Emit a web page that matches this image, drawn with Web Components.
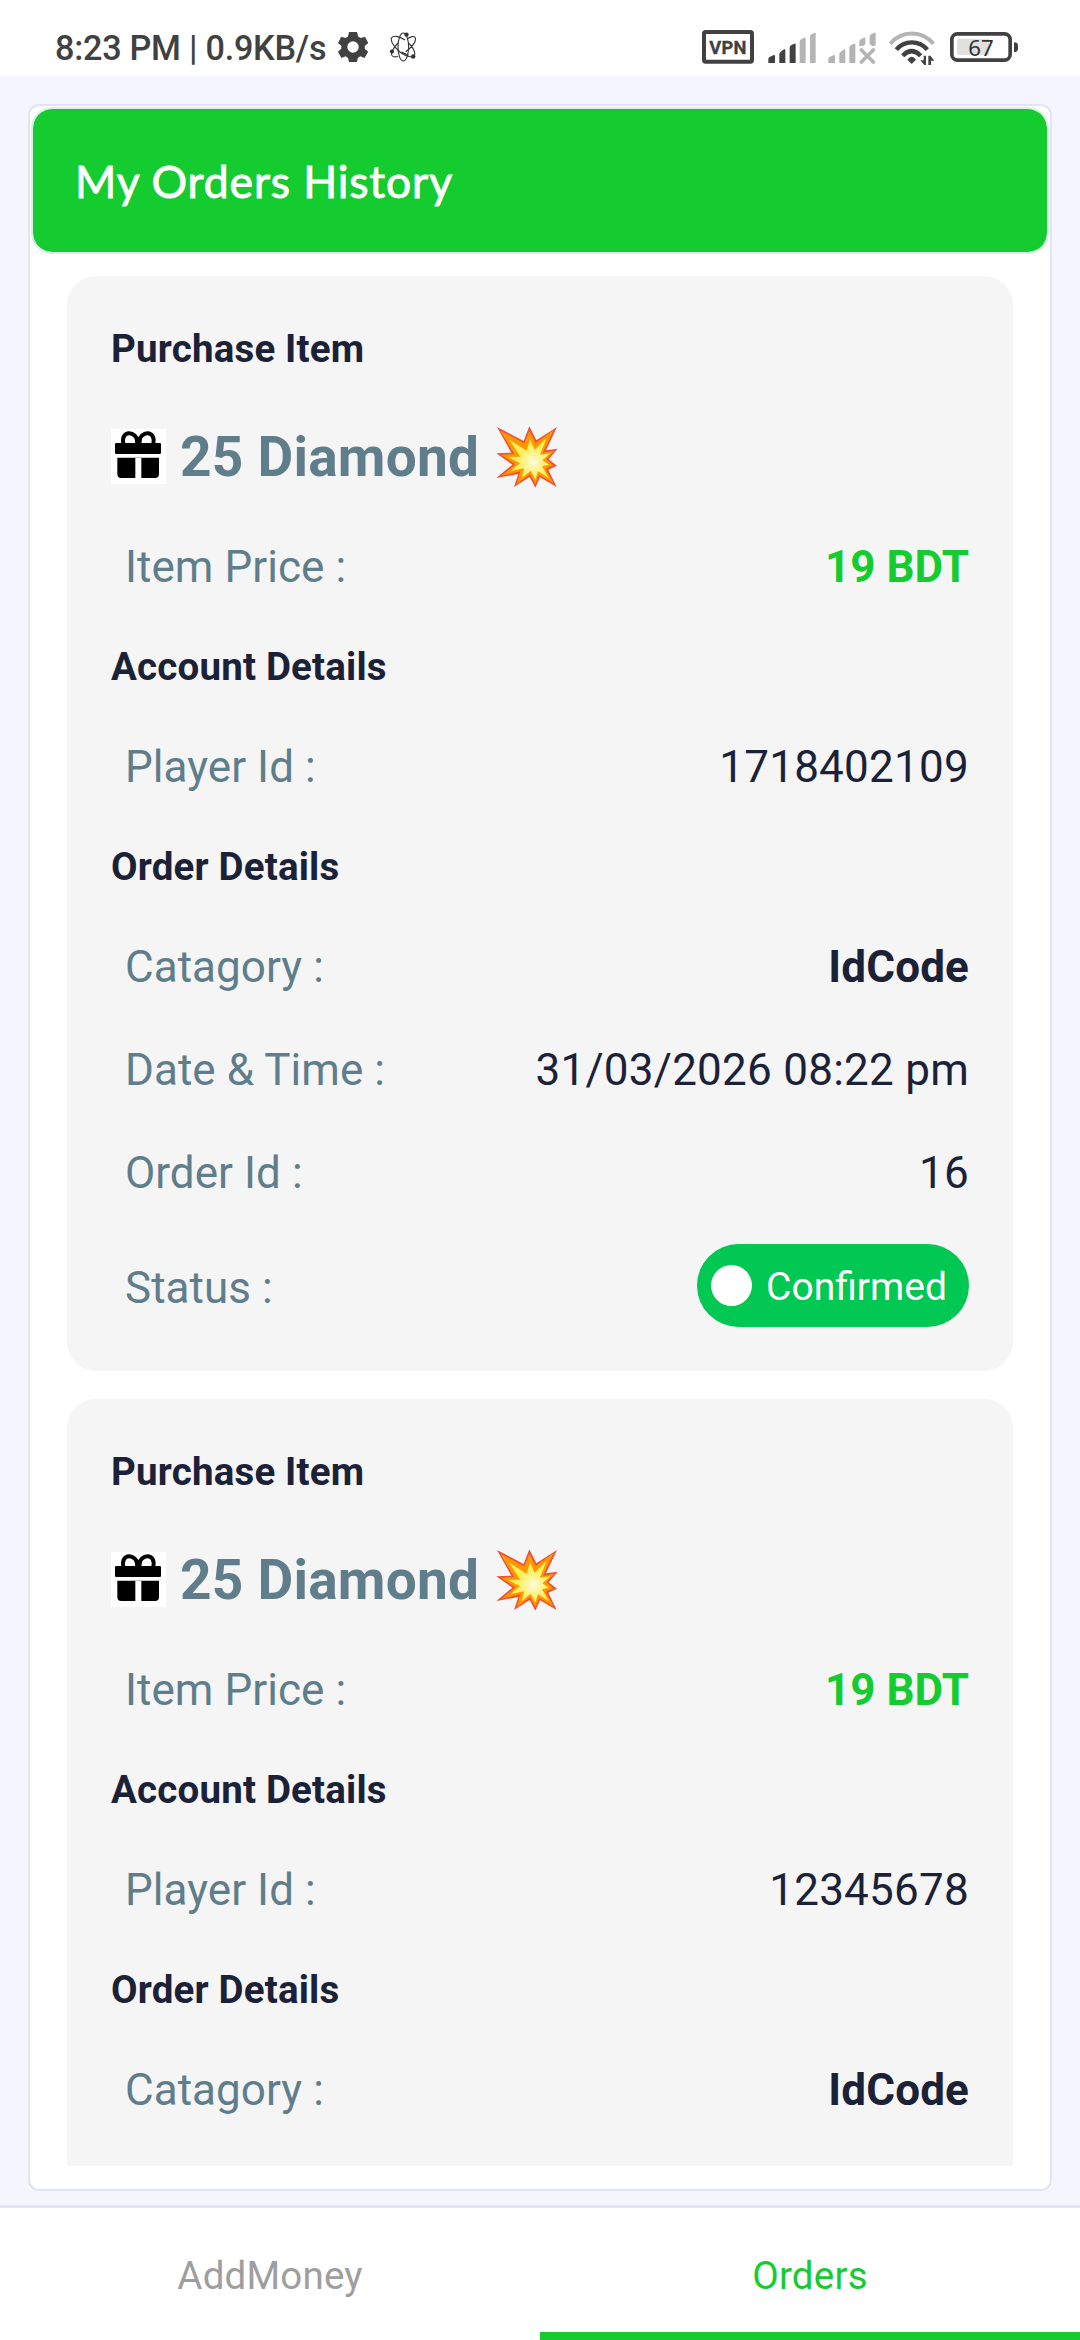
<!DOCTYPE html>
<html lang="en">
<head>
<meta charset="utf-8">
<title>My Orders History</title>
<style>
html,body{margin:0;padding:0}
body{width:1080px;height:2340px;overflow:hidden;background:#f4f5ff;font-family:Roboto,"Liberation Sans",sans-serif}
</style>
</head>
<body>
<app-screen>
  <status-bar slot="status"></status-bar>
  <orders-panel heading="My Orders History">
    <order-card item="25 Diamond" price="19 BDT" player="1718402109" category="IdCode" date="31/03/2026 08:22 pm" order="16" status="Confirmed"></order-card>
    <order-card item="25 Diamond" price="19 BDT" player="12345678" category="IdCode"></order-card>
  </orders-panel>
  <tab-bar slot="nav"><tab-item>AddMoney</tab-item><tab-item active>Orders</tab-item></tab-bar>
</app-screen>
<script>
const define = (name, render) => customElements.define(name, class extends HTMLElement {
  connectedCallback() {
    if (this.shadowRoot) return;
    this.attachShadow({mode: 'open'}).innerHTML = render(this);
  }
});

define('app-screen', () => `
<style>
:host{display:flex;flex-direction:column;width:1080px;height:2340px;overflow:hidden}
main{flex:1;min-height:0;display:flex;padding:28px 28px 14px;box-sizing:border-box}
</style>
<slot name="status"></slot><main><slot></slot></main><slot name="nav"></slot>`);

define('status-bar', () => `
<style>
:host{display:flex;align-items:flex-start;height:76px;box-sizing:border-box;background:#fff;padding:29px 62px 0 55px;color:#414141}
.time{font-size:34.2px;line-height:38px;font-weight:500;white-space:pre;width:282.5px;letter-spacing:-.25px}
svg{display:block;height:36px;flex:none}
.gear{margin-right:22px}
.space{flex:1}
.right{display:flex}
</style>
<span class="time">8:23 PM | 0.9KB/s</span>
<svg class="gear" width="30" viewBox="0 -3 30 36"><path fill="#414141" fill-rule="evenodd" d="M11 0h8l1.2 4.6 2.4 1.4 4.4-1.3 3.3 6.3-3.5 3v3l3.3 2.7-3.6 6.3-4.3-1.7-2.4 1.6L19 30h-8l-1-4.1L7.700 24.300 3.400 26 0 19.700 3.300 16.700v-3L0 11l3.200-6.300L7.600 6 10 4.600zM15 9.300a5.700 5.700 0 1 0 0 11.400 5.700 5.700 0 0 0 0-11.400z"/></svg>
<svg width="27" viewBox="0 -3 27 36"><g fill="none" stroke="#333" stroke-width="1.1"><ellipse cx="13.300" cy="15" rx="5.300" ry="14"/><path d="M15 8C9 4 3 3 1.500 6c-1.500 4 4 10 9 14.500 6 4 12 6 14 2.500 1-3-2-8-6-12M17 7c4-2.500 7-3.300 8.200-1.300 1.500 4-4 10-9.500 14M8 11c-4 4-7.500 10-6 12.500 1.200 1.700 4 1.500 6 .8M11.500 20l7 3.300"/></g><g fill="#333"><circle cx="16.500" cy="2.600" r="2.200"/><circle cx="2" cy="19.500" r="2.100"/><circle cx="23.200" cy="24.500" r="2.200"/></g></svg>
<span class="space"></span>
<div class="right">
<svg width="52" viewBox="63 27 156 108"><rect x="69" y="36" width="144" height="89" rx="5" fill="none" stroke="#414141" stroke-width="12"/><text x="141" y="101" font-family="Roboto,sans-serif" font-weight="700" font-size="55" letter-spacing="1" text-anchor="middle" fill="#414141" stroke="#414141" stroke-width="1">VPN</text></svg>
<svg style="margin-left:14px" width="48" viewBox="261 27 144 108"><g fill="#414141"><path d="M262 129v-12q0-4 4-6l12-6q4-1 4 3v21zM295 129v-26q0-5 4-8l10-7q4-2 4 3v38zM326 129v-45q0-5 4-8l10-5q4-1 4 3v55z"/></g><g fill="#b4b4b4"><path d="M356 129v-63q0-5 4-8l10-5q4-1 4 3v73zM387 129v-78q0-5 4-8l10-5q3-1 3 3v88z"/></g></svg>
<svg style="margin-left:12px" width="48" viewBox="441 27 144 108"><g fill="#b4b4b4"><path d="M442 129v-12q0-4 4-6l13-6q3-1 3 3v21zM475 129v-26q0-5 4-8l11-7q3-2 3 3v38zM505 129v-45q0-5 4-8l10-5q4-1 4 3v55zM535 78v-12q0-5 4-8l10-5q4-1 4 3v15q-2 6-9 7zM566 71v-20q0-5 4-8l10-5q4-1 4 3v34l-7 4q-8-2-11-8z"/></g><path d="M541 90l36 36M577 90l-36 36" stroke="#b4b4b4" stroke-width="11" stroke-linecap="round"/></svg>
<svg style="margin-left:12px" width="48" viewBox="621 27 144 108"><g fill="none" stroke-linecap="butt"><path d="M628 71a83 83 0 0 1 129 0" stroke="#b4b4b4" stroke-width="12"/><path d="M646 89a60 60 0 0 1 93 0" stroke="#414141" stroke-width="13"/><path d="M665 107q27-27 54 0" stroke="#414141" stroke-width="13"/></g><path fill="#414141" d="M679 119q13-17 26 0l-13 13zM728 107h7v28h-5l-12-14h10zM742 135v-28h6l12 15h-10v13z"/></svg>
<svg style="margin-left:14px" width="68" viewBox="807 27 204 108"><rect x="812.500" y="41.500" width="175" height="79" rx="17" fill="#fff" stroke="#414141" stroke-width="11"/><path d="M834 56h90v49h-90q-6 0-6-6v-37q0-6 6-6z" fill="#e1e1e1"/><path d="M999 67q12 0 12 10v9q0 10-12 10z" fill="#414141"/><text x="900" y="107" text-anchor="middle" font-family="Noto Sans,sans-serif" font-size="67" fill="#333">67</text></svg>
</div>`);

define('orders-panel', el => `
<style>
:host{display:flex;flex-direction:column;flex:1;min-width:0;box-sizing:border-box;border:2px solid #e0e4f6;border-radius:11px;background:#fff;padding:1px 1px 23px}
header{height:147px;flex:none;box-sizing:border-box;border:2px solid #d9f2e6;border-bottom-color:#dcebf1;border-radius:21px;background:#14cc2f;background-clip:padding-box;color:#fff;padding-left:42px;display:flex;align-items:center}
h1{margin:1px 0 0;font:400 44.500px/60px Lato,sans-serif;-webkit-text-stroke:.9px #fff;letter-spacing:.850px;white-space:nowrap}
.list{flex:1;min-height:0;overflow:hidden;margin-top:22px;padding:0 36px;display:flex;flex-direction:column;gap:28px}
</style>
<header><h1>${el.getAttribute('heading')}</h1></header>
<div class="list"><slot></slot></div>`);

define('section-title', () => `
<style>:host{display:flex;align-items:center;height:97px;font-size:38.500px;letter-spacing:.18px;font-weight:700;color:#1b2238;white-space:nowrap}</style><slot></slot>`);

define('detail-row', () => `
<style>
:host{display:flex;align-items:center;justify-content:space-between;height:103px;padding-left:14px;font-size:44px;color:#1b2238;white-space:nowrap}
.label{color:#607d8b;letter-spacing:.05px}
.value{letter-spacing:.25px}
:host([strong]) .value{font-weight:700;letter-spacing:.15px}
:host([price]) .value{font-weight:700;letter-spacing:0;color:#14cc2f}
:host([tall]){height:125px}
:host([tall]) .label{padding-top:2px}
</style>
<span class="label"><slot name="label"></slot></span><span class="value"><slot></slot></span>`);

define('status-pill', () => `
<style>
:host{display:flex;align-items:center;box-sizing:border-box;width:272px;height:83px;border-radius:42px;background:#00c853;padding-left:14px;color:#fff;font-size:38.500px;margin-bottom:3px;letter-spacing:0}
i{width:41px;height:41px;border-radius:50%;background:#fff;margin-right:14px}
span{padding-top:3px;font-size:39px}
</style><i></i><span><slot></slot></span>`);

define('gift-icon', () => `
<style>:host{display:block;width:55px;height:55px;background:#fff}svg{display:block}</style>
<svg width="55" height="55" viewBox="0 0 165 165"><path fill="none" stroke="#000" stroke-width="12" d="M37 43C29 4 75 2 82 41C89 2 135 4 127 43"/><path d="M70 22l12 18 12-18-3 23H73z"/><rect x="12" y="42" width="138" height="33" rx="4"/><path d="M19 87h54v60H31q-12 0-12-12zM91 87h53v48q0 12-12 12H91z"/><path d="M19 85.500h125" stroke="#9aa39a" stroke-width="2"/></svg>`);

define('burst-icon', () => `
<style>:host{display:block;width:62px;height:62px}svg{display:block}</style>
<svg width="62" height="62" viewBox="1189 80 186 186"><defs><radialGradient id="core" gradientUnits="userSpaceOnUse" cx="1301" cy="188" r="48"><stop offset="0" stop-color="#fffde0"/><stop offset=".45" stop-color="#fff59d"/><stop offset="1" stop-color="#ffee58"/></radialGradient></defs>
<path fill="#ef5138" d="M1192 83L1272 125 1289 81 1310 123 1372 83 1339 153 1374 148 1347 180 1372 199 1346 211 1371 263 1321 234 1307 265 1290 233 1243 263 1256 224 1190 236 1238 196 1190 162 1235 160z"/>
<path fill="#ff9800" d="M1202 94L1274 132 1289 94 1308 131 1362 92 1330 160 1364 154 1340 180 1361 198 1338 208 1361 252 1319 227 1307 254 1291 225 1252 253 1262 216 1206 229 1247 195 1204 166 1244 164z"/>
<path fill="url(#core)" d="M1229 121L1281 154 1291 120 1305 151 1341 115 1321 166 1352 162 1328 183 1348 196 1327 201 1347 236 1315 216 1307 241 1293 214 1267 236 1273 207 1232 215 1261 192 1225 173 1262 172z"/></svg>`);

define('order-card', el => {
  const a = n => el.getAttribute(n) || '';
  const row = (label, value, attr = '') => `<detail-row ${attr}><span slot="label">${label}</span>${value}</detail-row>`;
  const rest = a('date') ? row('Date &amp; Time :', a('date')) + row('Order Id :', a('order')) +
    row('Status :', `<status-pill>${a('status')}</status-pill>`, 'tall') : '';
  return `
<style>
:host{display:block;flex:none;box-sizing:border-box;height:1095px;border-radius:29px;background:#f5f5f5;padding:24px 44px 0}
.item{display:flex;align-items:center;height:118px;font-size:55px;font-weight:700;color:#607d8b;white-space:nowrap}
.name{margin:1px 17px 0 14px;letter-spacing:.22px}
burst-icon{margin-top:2px}
</style>
<section-title>Purchase Item</section-title>
<div class="item"><gift-icon></gift-icon><span class="name">${a('item')}</span><burst-icon></burst-icon></div>
${row('Item Price :', a('price'), 'price')}
<section-title>Account Details</section-title>
${row('Player Id :', a('player'))}
<section-title>Order Details</section-title>
${row('Catagory :', a('category'), 'strong')}
${rest}`;
});

define('tab-bar', () => `
<style>:host{display:flex;flex:none;height:135px;box-sizing:border-box;border-top:3px solid #e0e4f4;background:#fff}</style><slot></slot>`);

define('tab-item', () => `
<style>
:host{flex:1;display:flex;align-items:center;justify-content:center;box-sizing:border-box;padding-top:10px;border-bottom:8px solid transparent;font-size:38.500px;letter-spacing:.2px;color:#9e9e9e}
:host([active]){color:#14cc2f;border-bottom-color:#14cc2f}
</style><slot></slot>`);
</script>
</body>
</html>
